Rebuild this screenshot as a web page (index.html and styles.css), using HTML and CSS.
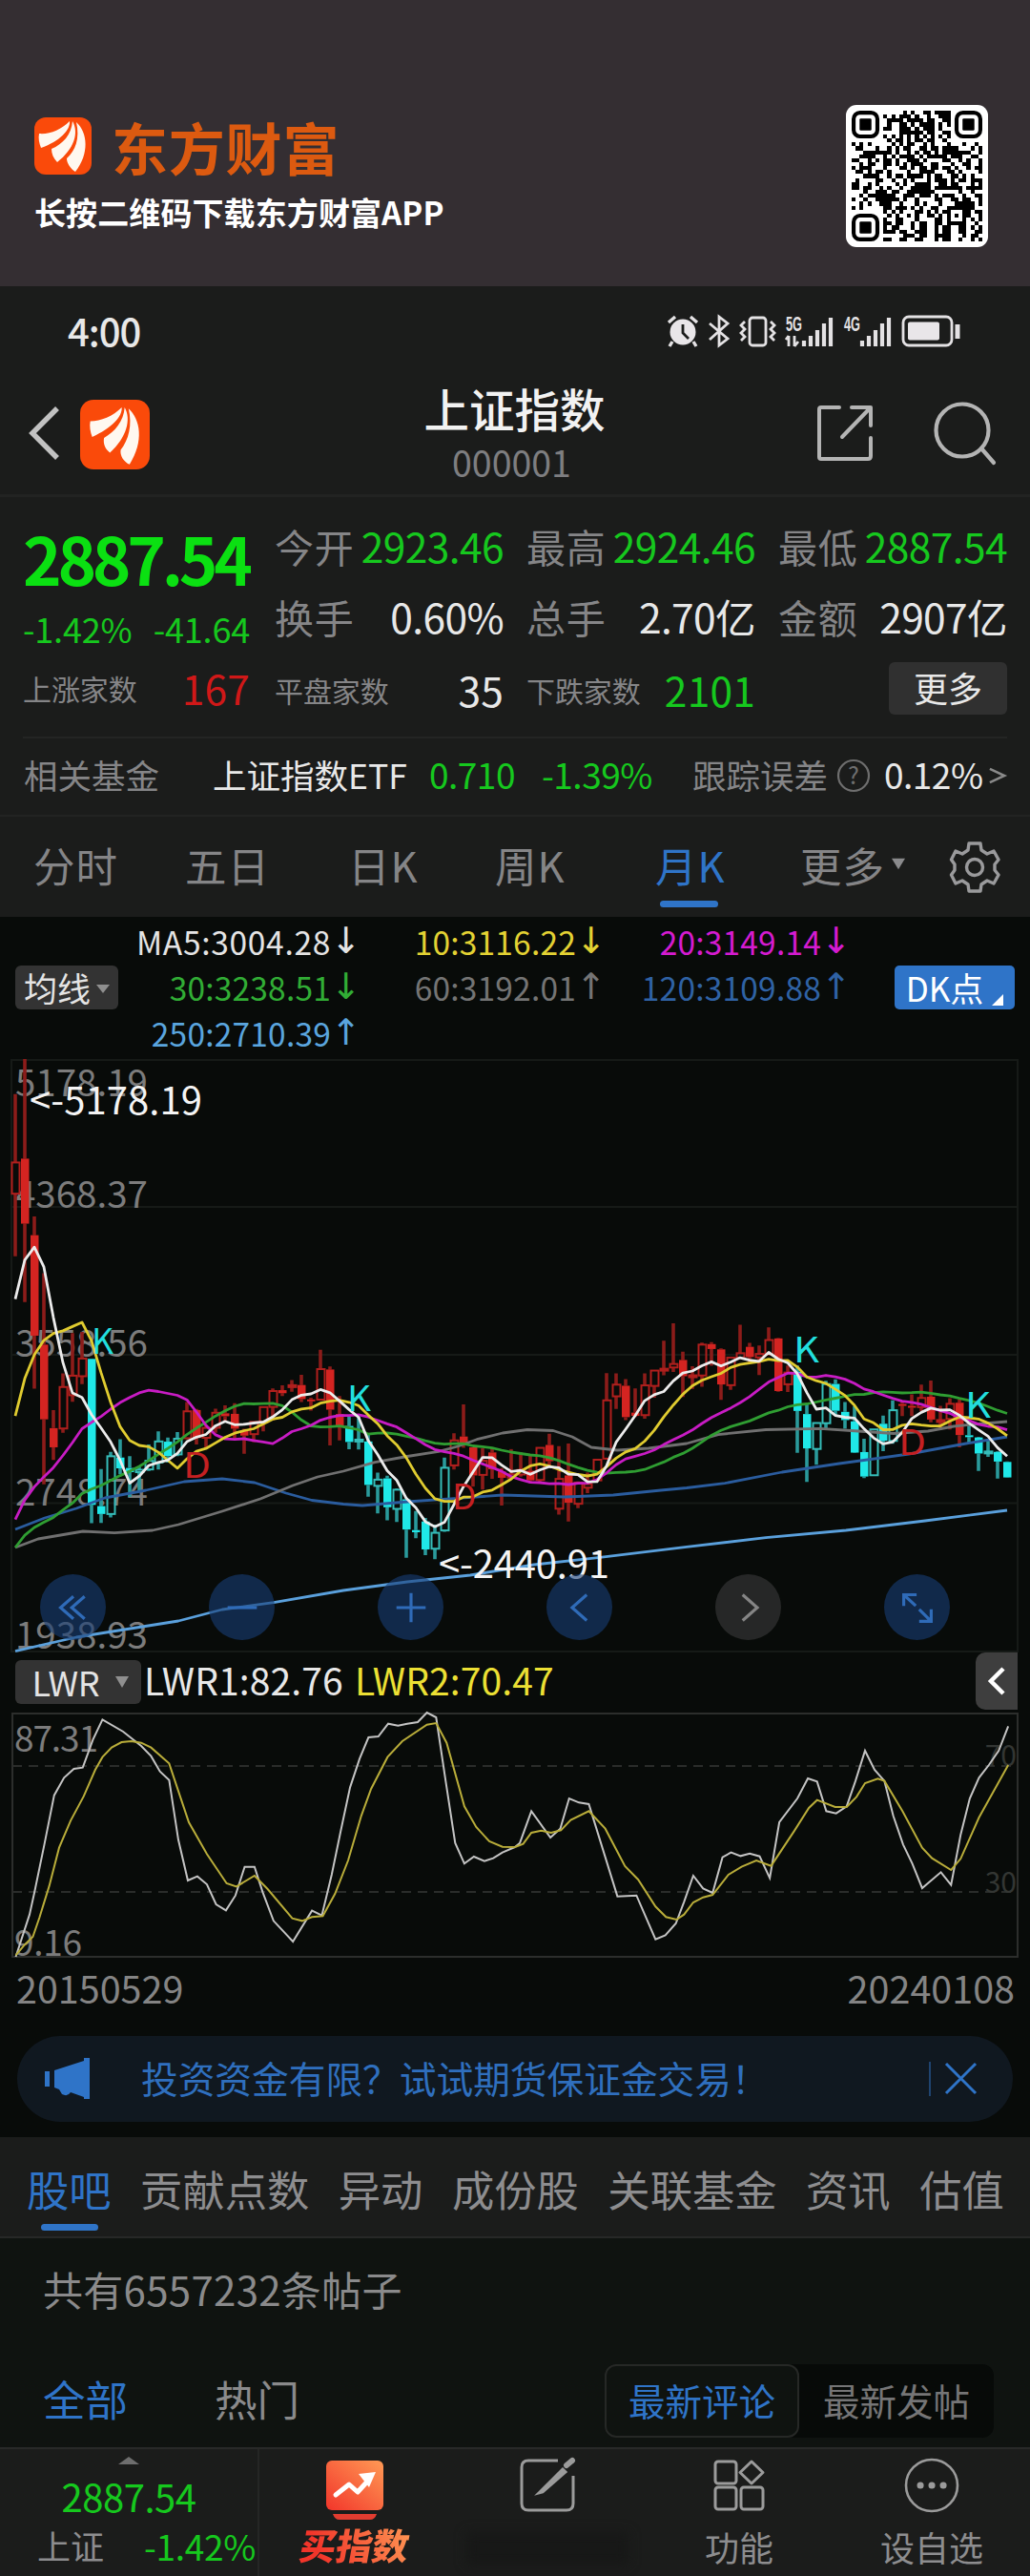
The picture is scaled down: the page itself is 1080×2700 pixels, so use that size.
FILE: index.html
```html
<!DOCTYPE html>
<html lang="zh-CN">
<head>
<meta charset="utf-8">
<title>上证指数 000001</title>
<link rel="stylesheet" href="styles.css">
</head>
<body>
<svg width="0" height="0" class="defs" aria-hidden="true">
  <defs>
    <symbol id="brand" viewBox="0 0 60 60">
      <rect width="60" height="60" rx="12" fill="#fa4a0a"/>
      <path fill="#fff8f0" d="M5 17C16 18 28 13 37 4C38 13 27 25 7 32C5 27 4 22 5 17Z"/>
      <path fill="#fff8f0" d="M18 33C30 28 39 18 40 4C47 16 42 33 24 47C20 43 18 38 18 33Z"/>
      <path fill="#fff8f0" d="M44 5C56 16 58 38 43 57C38 54 34 48 34 43C43 35 48 22 44 5Z"/>
    </symbol>
    <symbol id="brand-small" viewBox="0 0 73 73">
      <rect width="73" height="73" rx="14" fill="#fa4a0a"/>
      <g fill="#fff8f0" transform="translate(5.500 4) scale(1.03)">
        <path d="M5 18C16 18 28 13 37 4C38 13 27 25 7 34C5 29 4 23 5 18Z"/>
        <path d="M19 35C30 29 39 18 40 4C47 16 42 35 25 50C20 46 18 41 19 35Z"/>
        <path d="M44 5C56 16 60 38 45 62C39 59 35 53 36 47C44 37 48 22 44 5Z"/>
      </g>
    </symbol>
    <linearGradient id="hot" x1="0" y1="1" x2="1" y2="0"><stop offset="0" stop-color="#f2352a"/><stop offset="1" stop-color="#ff9a55"/></linearGradient>
  </defs>
</svg>

<header class="promo">
  <div class="promo-text">
    <div class="promo-brand"><svg width="60" height="60"><use href="#brand"/></svg><span>东方财富</span></div>
    <div class="promo-tip">长按二维码下载东方财富APP</div>
  </div>
  <div class="qr"><svg id="qr" width="137" height="137" viewBox="0 0 33 33" shape-rendering="crispEdges"></svg></div>
</header>

<div class="status">
  <span class="clock">4:00</span>
  <svg width="310" height="36" viewBox="0 0 310 36" fill="none" stroke="#e4e2e4" stroke-width="2.800">
    <g><circle cx="17" cy="19" r="13.5" fill="#e9e6e9" stroke="none"/><path d="M2 9L9 3M32 9L25 3M6 29L3 34M28 29L31 34" stroke-width="3.4"/><path d="M17 11V20L23 26" stroke="#1b1c1b"/></g>
    <path d="M45 10L64 26L55 33V3L64 10L45 27"/>
    <rect x="87" y="4" width="17" height="29" rx="3"/><path d="M82 8l-4 4 4 4-4 4 4 4-4 4M109 8l4 4-4 4 4 4-4 4 4 4"/>
    <text class="net" x="125" y="18" textLength="17" lengthAdjust="spacingAndGlyphs">5G</text>
    <path d="M128 23V34M128 23l-3 4M134 23V34M134 34l4-5"/>
    <path d="M144 28V34M151 23V34M158 17V34M165 10V34M172 4V34M205 28V34M212 23V34M219 17V34M226 10V34M233 4V34" stroke-width="4.2"/>
    <text class="net" x="186" y="18" textLength="17" lengthAdjust="spacingAndGlyphs">4G</text>
    <rect x="248" y="3" width="51" height="30" rx="6"/><rect x="253" y="8.500" width="33" height="19" rx="2" fill="#e9e6e9" stroke="none"/><path d="M305 11V26" stroke-width="5"/>
  </svg>
</div>

<nav class="nav">
  <svg class="back" width="34" height="56" viewBox="0 0 34 56" fill="none" stroke="#c2c2c2" stroke-width="5.500"><path d="M31 2L5 28L31 54"/></svg>
  <svg class="nav-logo" width="73" height="73"><use href="#brand-small"/></svg>
  <div class="nav-title"><h1>上证指数</h1><span>000001</span></div>
  <svg width="60" height="60" viewBox="0 0 60 60" fill="none" stroke="#b4b4b4" stroke-width="4" stroke-linecap="round" stroke-linejoin="round"><path d="M24 3H5Q3 3 3 5V55Q3 57 5 57H54Q57 57 57 54V35M37 3H57V22M56 4L27 34"/></svg>
  <svg width="66" height="68" viewBox="0 0 66 68" fill="none" stroke="#b4b4b4" stroke-width="4.200" stroke-linecap="round"><circle cx="30" cy="31" r="27.500"/><path d="M50 50L63 65"/></svg>
</nav>

<section class="quote">
  <div class="qcol first">
    <div class="price">2887.54</div>
    <div class="row chg"><span>-1.42%</span><span>-41.64</span></div>
    <div class="row cnt"><small>上涨家数</small><b class="red">167</b></div>
  </div>
  <div class="qcol">
    <div class="row"><i>今开</i><b class="green">2923.46</b></div>
    <div class="row"><i>换手</i><b>0.60%</b></div>
    <div class="row cnt"><small>平盘家数</small><b>35</b></div>
  </div>
  <div class="qcol">
    <div class="row"><i>最高</i><b class="green">2924.46</b></div>
    <div class="row"><i>总手</i><b>2.70亿</b></div>
    <div class="row cnt"><small>下跌家数</small><b class="green">2101</b></div>
  </div>
  <div class="qcol">
    <div class="row"><i>最低</i><b class="green">2887.54</b></div>
    <div class="row"><i>金额</i><b>2907亿</b></div>
    <div class="row end"><button class="more">更多</button></div>
  </div>
</section>

<section class="fund">
  <span class="muted fund-label">相关基金</span>
  <span class="fund-name">上证指数ETF</span>
  <span class="green num fund-price">0.710</span>
  <span class="green num fund-chg">-1.39%</span>
  <span class="muted">跟踪误差</span>
  <svg class="help" width="36" height="36" viewBox="0 0 36 36"><circle cx="18" cy="18" r="16" fill="none" stroke="#6e6e6e" stroke-width="2.200"/><text x="18" y="27" text-anchor="middle">?</text></svg>
  <span class="num">0.12%</span>
  <svg class="go" width="18" height="18" viewBox="0 0 20 20" fill="none" stroke="#8a8a8a" stroke-width="2.800"><path d="M1 2L18 10L1 18"/></svg>
</section>

<nav class="periods">
  <span>分时</span><span>五日</span><span>日K</span><span>周K</span><span class="on">月K</span>
  <span class="drop">更多<svg width="14" height="13" viewBox="0 0 16 13"><path d="M0 0H16L8 13Z" fill="#8a8a8c"/></svg></span>
  <svg width="52" height="54" viewBox="0 0 52 54" fill="none" stroke="#9a9a9c" stroke-width="3.400" stroke-linejoin="round"><path d="M20 2H32L33 9L39 13L46 10L51 19L47 24V30L51 35L46 44L39 41L33 45L32 52H20L19 45L13 41L6 44L1.500 35L5 30V24L1.500 19L6 10L13 13L19 9Z"/><circle cx="26" cy="27" r="8.500"/></svg>
</nav>

<section class="ma">
  <button class="chip">均线<svg width="14" height="9"><path d="M0 0H14L7 9Z" fill="#8f8f8f"/></svg></button>
  <div class="ma-grid">
    <span class="white wide-name">MA5:3004.28<u>↓</u></span><span class="yellow">10:3116.22<u>↓</u></span><span class="magenta">20:3149.14<u>↓</u></span>
    <span class="lime">30:3238.51<u>↓</u></span><span class="gray">60:3192.01<u>↑</u></span><span class="blue">120:3109.88<u>↑</u></span>
    <span class="sky">250:2710.39<u>↑</u></span>
  </div>
  <button class="dk">DK点<svg width="12" height="12"><path d="M12 0V12H0Z" fill="#fff"/></svg></button>
</section>

<section class="kchart">
  <svg id="kline" width="1080" height="622" viewBox="0 0 1080 622" fill="none">
    <g stroke="#161a17" stroke-width="2"><path d="M12 1H1067V621H12ZM12 155H1067M12 310H1067M12 465.500H1067"/></g>
    <g class="axis"><text x="16" y="39">5178.19</text><text x="16" y="156">4368.37</text><text x="16" y="312">3558.56</text><text x="16" y="468">2748.74</text><text x="16" y="618">1938.93</text></g>
    <g id="candles"></g>
    <g stroke-width="2.800" stroke-linejoin="round">
      <polyline stroke="#5aa0dc" points="16,620.600 80,606 187,589 233,577 287,569.600 360,557 427,548 493,541 560,530 627,522.700 720,511.400 803,501.700 887,494 970,484 1056,473"/>
      <polyline stroke="#2a5c9e" points="16,493 47,481 80,471 110,460 153,452 193,443 233,440 267,444 300,455 327,462.500 360,466.500 380,468 427,464 480,460.400 527,457 593,459 643,457 693,452 720,449.500 760,444.600 820,433 880,424 953,414 1013,403 1056,396"/>
      <polyline stroke="#707070" points="16,512 40,503 87,495 120,496.600 160,494 187,488 233,474 273,461 307,447 333,438 360,432 393,422.600 427,416.500 460,411.400 480,406 500,398.700 527,392 553,388.500 580,389.500 600,396 620,407 647,410 680,408 720,403 753,393.600 803,388.500 860,387.400 900,390 937,392.500 973,390 1000,385 1020,383 1056,380"/>
      <g id="averages"></g>
    </g>
    <g class="marks"><text class="k" x="96" y="309" textLength="23" lengthAdjust="spacingAndGlyphs">K</text><text class="k" x="364" y="369" textLength="25" lengthAdjust="spacingAndGlyphs">K</text><text class="k" x="832" y="318" textLength="27" lengthAdjust="spacingAndGlyphs">K</text><text class="k" x="1012" y="376" textLength="27" lengthAdjust="spacingAndGlyphs">K</text><text class="d" x="192" y="439" textLength="29" lengthAdjust="spacingAndGlyphs">D</text><text class="d" x="474" y="472">D</text><text class="d" x="942" y="415" textLength="29" lengthAdjust="spacingAndGlyphs">D</text></g>
    <g class="peaks"><text x="31" y="58" textLength="181">&lt;-5178.19</text><text x="460" y="544" textLength="179">&lt;-2440.91</text></g>
  </svg>
  <div class="tools">
    <button><svg viewBox="0 0 40 40"><path d="M20 7L5 20L20 33M33 7L18 20L33 33"/></svg></button>
    <button><svg viewBox="0 0 40 40"><path d="M3 20H37"/></svg></button>
    <button><svg viewBox="0 0 40 40"><path d="M3 20H37M20 3V37"/></svg></button>
    <button><svg viewBox="0 0 40 40"><path d="M28 5L11 20L28 35"/></svg></button>
    <button class="off"><svg viewBox="0 0 40 40"><path d="M13 5L30 20L13 35"/></svg></button>
    <button><svg viewBox="0 0 40 40"><path d="M19 5H4V18M4 5L18 18M36 22V36H22M36 36L22 22"/></svg></button>
  </div>
</section>

<section class="lwr-head">
  <button class="chip wide">LWR<svg width="14" height="12"><path d="M0 0H14L7 12Z" fill="#8f8f8f"/></svg></button>
  <span class="l1">LWR1:82.76</span><span class="l2">LWR2:70.47</span>
  <button class="fold"><svg width="18" height="30" viewBox="0 0 18 30" fill="none" stroke="#fff" stroke-width="4.500"><path d="M16 2L3 15L16 28"/></svg></button>
</section>

<section class="lwr">
  <svg width="1080" height="257" viewBox="0 0 1080 257" fill="none">
    <path d="M13 1H1067V256H13Z" stroke="#2c2e2c" stroke-width="2"/>
    <path d="M13 56H1067M13 188H1067" stroke="#2a2c2a" stroke-width="2" stroke-dasharray="10 7"/>
    <g class="axis"><text x="15" y="41" textLength="88">87.31</text><text x="15" y="255" textLength="71">9.16</text><text class="dim" x="1066" y="56">70</text><text class="dim" x="1066" y="189">30</text></g>
    <g transform="scale(.34435 .33333) translate(0 -225)" stroke-width="2" class="lines">
      <polyline stroke="#c4c4c4" points="48,993 90,860 105,790 135,640 165,485 195,430 225,402 252,398 283,310 312,247 375,285 430,330 460,362 487,410 515,437 543,625 572,753 601,740 630,765 658,828 688,847 717,800 745,710 775,710 800,790 833,880 892,945 950,848 980,863 1010,735 1037,600 1066,460 1095,370 1122,303 1152,300 1182,260 1212,266 1240,260 1272,255 1300,225 1328,240 1357,440 1386,635 1414,700 1443,678 1475,692 1502,683 1530,665 1568,648"/>
      <polyline stroke="#b9ad3a" points="48,988 75,955 100,930 120,870 150,770 180,650 215,565 255,488 290,405 312,365 340,335 370,318 400,315 430,320 460,335 515,385 575,570 630,670 690,762 720,772 775,738 815,780 890,872 920,880 950,868 983,865 1020,795 1060,690 1100,550 1130,465 1180,365 1225,315 1300,263 1328,258 1360,320 1414,520 1450,585 1490,630 1530,647 1568,648"/>
      <g transform="translate(1568 0)">
        <polyline stroke="#c4c4c4" points="0,648 15,635 50,535 108,618 138,590 165,495 195,508 225,513 312,803 370,800 428,938 458,925 490,888 515,820 543,738 573,778 602,792 632,680 658,665 687,676 715,668 745,677 776,745 805,570 860,495 892,432 920,442 948,535 978,542 1010,520 1037,440 1066,345 1095,405 1125,440 1152,550 1182,640 1210,700 1240,777 1297,727 1328,767 1357,610 1385,495 1413,430 1443,390 1473,345 1502,268"/>
        <polyline stroke="#b9ad3a" points="0,648 25,638 50,603 80,596 110,603 140,595 170,563 225,535 275,590 335,708 375,750 428,835 460,868 492,876 515,860 543,822 573,806 602,798 650,735 690,710 735,690 780,707 850,598 895,525 920,500 975,522 1010,522 1040,490 1066,447 1105,433 1125,440 1180,535 1240,650 1270,683 1328,720 1357,685 1413,555 1502,390"/>
      </g>
    </g>
  </svg>
</section>
<div class="dates"><span>20150529</span><span>20240108</span></div>

<aside class="notice">
  <svg width="48" height="44" viewBox="0 0 48 44" fill="#2f74c8"><path d="M0 14H5V30H0ZM10 13L41 3V0H47V43H41V41L27 36Q24 41 18 38L15 33L10 31Z"/></svg>
  <span>投资资金有限？试试期货保证金交易！</span>
  <svg class="close" width="50" height="38" viewBox="0 0 50 38" fill="none"><path d="M1 1V37" stroke="#1f4470" stroke-width="2"/><path d="M18 3L49 34M49 3L18 34" stroke="#2f74c8" stroke-width="3"/></svg>
</aside>

<nav class="tabs"><span class="on">股吧</span><span>贡献点数</span><span>异动</span><span>成份股</span><span>关联基金</span><span>资讯</span><span>估值</span></nav>

<section class="posts">
  <p>共有6557232条帖子</p>
  <div class="filter">
    <span class="on">全部</span><span>热门</span>
    <div class="seg"><button class="sel">最新评论</button><button>最新发帖</button></div>
  </div>
</section>

<footer class="bottom">
  <div class="ticker">
    <svg width="22" height="8"><path d="M0 8L11 0L22 8Z" fill="#6e6e6e"/></svg>
    <strong>2887.54</strong>
    <div><span>上证</span><em>-1.42%</em></div>
  </div>
  <div class="item buy">
    <svg width="62" height="64" viewBox="0 0 62 64"><rect x="1" y="1" width="60" height="52" rx="6" fill="url(#hot)"/><path d="M8 57H54Q52 63 47 63H15Q10 63 8 57Z" fill="#e23c30"/><path d="M11 37L25 26L34 34L45 22" fill="none" stroke="#fff" stroke-width="5" stroke-linecap="round" stroke-linejoin="round"/><path d="M35 15L53 13L46 29Z" fill="#fff"/></svg>
    <span>买指数</span>
  </div>
  <div class="item edit">
    <svg width="58" height="58" viewBox="0 0 58 58" fill="none" stroke="#9b9b9b" stroke-width="3"><path d="M40 3H9Q2 3 2 10V48Q2 55 9 55H49Q56 55 56 48V19"/><path d="M20 37L45 12L48 15L24 36Z" fill="#9b9b9b"/><path d="M49 8L55 3" stroke-width="6" stroke-linecap="round"/></svg>
    <div class="smudge"></div>
  </div>
  <div class="item">
    <svg width="56" height="58" viewBox="0 0 56 58" fill="none" stroke="#9b9b9b" stroke-width="3"><rect x="3" y="4" width="22" height="23" rx="3"/><rect x="3" y="31" width="22" height="23" rx="3"/><rect x="30" y="31" width="23" height="23" rx="3"/><path d="M41 4L53 15.500L41 27L29 15.500Z" stroke-linejoin="round"/></svg>
    <span>功能</span>
  </div>
  <div class="item last">
    <svg width="58" height="58" viewBox="0 0 58 58" fill="none" stroke="#9b9b9b" stroke-width="2.600"><circle cx="29" cy="29" r="27"/><path d="M17 29h.1M29 29h.1M41 29h.1" stroke-width="7" stroke-linecap="round"/></svg>
    <span>设自选</span>
  </div>
</footer>
<script src="app.js"></script>
</body>
</html>
```
FILE: styles.css
```css
* { box-sizing: border-box; }
body { margin: 0; width: 1080px; background: #080b09; color: #e8e8e8; font-family: "Noto Sans CJK SC", "Noto Sans", sans-serif; overflow-x: hidden; }
svg { display: block; flex: none; overflow: visible; }
.defs { position: absolute; }
button { border: 0; padding: 0; margin: 0; font: inherit; color: inherit; background: none; }
i, em, u { font-style: normal; text-decoration: none; }
b, h1, strong { font-weight: 400; margin: 0; }
.green { color: #16c81e; }
.red { color: #d01818; }
.muted { color: #858587; }

.promo { height: 300px; background: #342e32; display: flex; justify-content: space-between; align-items: flex-start; padding: 110px 44px 0 36px; }
.promo-brand { display: flex; align-items: center; gap: 21px; height: 60px; margin-top: 13px; }
.promo-brand span { font-size: 59px; font-weight: 700; line-height: 60px; color: #dc5a10; letter-spacing: .8px; padding-top: 2px; }
.promo-tip { font-size: 33px; font-weight: 700; color: #fff; line-height: 40px; margin-top: 19px; letter-spacing: .1px; }
.qr { width: 149px; height: 149px; border-radius: 11px; background: #fff; padding: 6px; }

.status { height: 97px; background: #1b1c1b; display: flex; justify-content: space-between; padding: 29px 71px 0 71px; }
.clock { font-size: 40px; line-height: 40px; font-weight: 500; letter-spacing: -1px; margin-top: -3px; }
.net { font: 700 22px "Liberation Sans", sans-serif; fill: #e4e2e4; stroke: none; }

.nav { height: 124px; background: #1b1c1b; border-bottom: 3px solid #222322; display: flex; align-items: center; padding: 0 35px 8px 29px; }
.nav svg:nth-of-type(3) { margin-right: 63px; }
.nav-logo { margin: 3px 0 0 21px; }
.nav-title { flex: 1; text-align: center; padding: 2px 0 0 66px; }
.nav-title h1 { font-size: 47.500px; line-height: 58px; font-weight: 500; color: #f2f2f2; }
.nav-title span { display: block; font-size: 37.500px; line-height: 54px; color: #7e7e80; margin-right: 6px; }

.quote { height: 251px; background: #1b1c1b; display: grid; grid-template-columns: repeat(4, 240px); gap: 24px; padding: 15px 24px 0; }
.qcol { margin-top: -1px; font-size: 43px; }
.row { display: flex; justify-content: space-between; align-items: center; height: 74px; }
.row i { font-size: 41px; color: #858587; letter-spacing: .8px; line-height: 60px; }
.row b { letter-spacing: -.6px; line-height: 60px; font-size: 42.500px; }
.row small { font-size: 30px; color: #858587; letter-spacing: -.1px; }
.first { margin-top: 0; width: 238px; }
.price { font-size: 69px; font-weight: 700; color: #0be012; line-height: 96px; letter-spacing: -4.3px; white-space: nowrap; }
.row.chg { height: 48px; font-size: 36px; color: #16c81e; letter-spacing: -.2px; padding-top: 4px; }
.row.cnt { height: 78px; padding-top: 1px; }
.first .cnt { height: 80px; }
.row.cnt b { letter-spacing: .2px; }
.more { width: 124px; height: 55px; border-radius: 6px; background: #303030; font-size: 36px; line-height: 50px; padding-bottom: 4px; }
.row.end { justify-content: flex-end; height: 77px; }

.fund { height: 84px; background: #1b1c1b; border-bottom: 2px solid #222322; display: flex; align-items: center; padding: 0 24px 4px 25px; font-size: 35.500px; position: relative; }
.fund::before { content: ""; position: absolute; left: 24px; right: 24px; top: 0; height: 2px; background: #242524; }
.fund-label { width: 198px; }
.fund-name { width: 227px; white-space: nowrap; letter-spacing: 0; }
.fund .num { font-size: 37px; letter-spacing: -.5px; }
.fund-price { width: 118px; }
.fund-chg { width: 158px; }
.help { margin: 4px 14px 0 9px; }
.help text { font-size: 25px; fill: #6e6e6e; }
.go { margin: 3px 1px 0 auto; }

.periods { height: 105px; background: #1b1c1b; display: grid; grid-template-columns: 159px 171px 154px 168px 152px 157px 52px; align-items: start; padding: 18px 0 0 35px; font-size: 43.500px; line-height: 66px; color: #858587; letter-spacing: 1px; }
.periods > svg { margin-top: 8px; }
.periods .on { color: #2f74c8; position: relative; }
.periods .on::after { content: ""; position: absolute; left: 5px; top: 70px; width: 61px; height: 7px; border-radius: 4px; background: #2f74c8; }
.drop { display: flex; align-items: center; gap: 7px; height: 66px; }
.drop svg { margin-top: -4px; }

.ma { height: 149px; position: relative; display: grid; grid-template-columns: 108px 1fr 126px; padding: 0 16px; align-items: center; }
.chip { width: 108px; height: 46px; border-radius: 6px; background: #333; color: #e4e4e4; font-size: 35px; display: flex; align-items: center; justify-content: center; gap: 6px; line-height: 44px; }
.chip svg { margin-top: 3px; }
.ma .chip, .dk { position: relative; top: -1px; }
.ma-grid { display: grid; grid-template-columns: 250px 257px 257px; grid-auto-rows: 48px; line-height: 48px; font-size: 33.500px; text-align: right; align-self: start; padding-top: 2px; letter-spacing: .2px; }
.ma-grid span { white-space: nowrap; }
.ma-grid .wide-name { letter-spacing: .7px; }
.ma-grid u { display: inline-block; width: 27px; height: 48px; vertical-align: top; font: 38px/46px "DejaVu Sans"; text-align: center; letter-spacing: 0; }
.white { color: #e4e4e4; } .yellow { color: #e3d233; } .magenta { color: #d41bd0; } .lime { color: #31ad35; } .gray { color: #747474; } .blue { color: #2f62a4; } .sky { color: #5aa5de; }
.dk { height: 46px; width: 126px; border-radius: 5px; background: #2f74c8; color: #fff; font-size: 35px; display: flex; align-items: center; justify-content: center; gap: 9px; line-height: 44px; }
.dk svg { margin-top: 26px; }

.kchart { height: 622px; position: relative; }
.axis { font-size: 38.500px; fill: #7c7c7c; }
.marks { font-size: 37px; }
.k { fill: #22dede; } .d { fill: #c42022; }
.peaks { font-size: 40px; fill: #f4f4f4; }
.tools { position: absolute; left: 42px; top: 540px; display: flex; gap: 108px; }
.tools button { width: 69px; height: 69px; border-radius: 50%; background: rgba(24, 62, 118, .6); display: flex; align-items: center; justify-content: center; }
.tools svg { width: 36px; height: 36px; fill: none; stroke: #2f6bb8; stroke-width: 3.500; }
.tools .off { background: rgba(64, 64, 64, .55); }
.tools .off svg { stroke: #858585; }

.lwr-head { height: 63px; display: flex; align-items: flex-start; padding: 0 13px 0 16px; font-size: 39px; line-height: 60px; letter-spacing: .1px; }
.chip.wide { width: 132px; margin: 8px 3px 0 0; gap: 17px; padding: 0 0 3px 5px; font-size: 36px; letter-spacing: -.3px; }
.l1, .l2 { margin-top: -2px; }
.l1 { width: 221px; color: #e8e8e8; } .l2 { color: #ece034; }
.fold { margin-left: auto; width: 44px; height: 60px; background: #3e3e3e; border-radius: 10px 0 0 10px; display: flex; align-items: center; justify-content: center; }

.lwr { height: 257px; }
.lwr .axis { font-size: 37px; }
.lwr .dim { font-size: 30px; fill: #333633; text-anchor: end; }
.lines polyline { vector-effect: non-scaling-stroke; }
.dates { height: 82px; display: flex; justify-content: space-between; padding: 1px 16px 0 17px; font-size: 39.500px; line-height: 60px; color: #848484; }

.notice { margin: 0 18px; height: 90px; border-radius: 45px; background: #101820; display: flex; align-items: center; padding: 0 38px 0 29px; color: #2f6fbe; font-size: 38.700px; }
.notice span { margin-left: 53px; padding-bottom: 4px; white-space: nowrap; }
.notice .close { margin-left: auto; }

.tabs { margin-top: 16px; height: 106px; background: #1b1c1b; border-bottom: 2px solid #272827; display: flex; gap: 30.500px; padding: 21px 0 0 28px; font-size: 44.300px; line-height: 66px; color: #8d8d8f; white-space: nowrap; }
.tabs .on, .filter .on { color: #2f74c8; }
.tabs .on { position: relative; }
.tabs .on::after { content: ""; position: absolute; left: 15px; top: 70px; width: 60px; height: 7px; border-radius: 4px; background: #2f74c8; }

.posts { height: 219px; background: #0f1310; padding: 25px 38px 0 45px; color: #8a8a8b; }
.posts p { margin: 0; font-size: 42px; line-height: 56px; letter-spacing: .3px; }
.filter { display: flex; align-items: center; margin-top: 51px; font-size: 44.500px; line-height: 70px; }
.filter > span { width: 180px; padding-bottom: 5px; }
.seg { margin-left: auto; display: flex; background: #070a08; border-radius: 12px; font-size: 38.500px; color: #757576; }
.seg button { width: 204px; height: 77px; line-height: 66px; padding-bottom: 4px; }
.seg .sel { color: #2f74c8; background: #0f1310; border: 2px solid #262826; border-radius: 12px; line-height: 64px; }

.bottom { height: 137px; background: #1b1c1b; border-top: 2px solid #282928; display: flex; color: #8d8d8f; }
.ticker { width: 272px; border-right: 2px solid #252625; display: flex; flex-direction: column; align-items: center; padding-top: 8px; }
.ticker strong { color: #16c81e; font-size: 40px; line-height: 54px; margin-top: 6px; letter-spacing: -.5px; }
.ticker div { display: flex; width: 100%; justify-content: space-between; font-size: 35px; line-height: 44px; padding: 3px 2px 0 39px; }
.ticker em { color: #16c81e; font-size: 37px; letter-spacing: -.3px; }
.item { width: 202px; display: flex; flex-direction: column; align-items: center; font-size: 36px; line-height: 46px; padding-top: 9px; }
.item span { margin-top: 12px; white-space: nowrap; }
.buy { padding-top: 11px; width: 200px; }
.item.buy span { margin-top: 2px; font-weight: 900; font-size: 38px; transform: skewX(-10deg); background: linear-gradient(60deg, #f2352a 20%, #ff9a55); -webkit-background-clip: text; background-clip: text; color: transparent; }
.edit { padding-left: 2px; }
.smudge { width: 170px; height: 34px; margin-top: 20px; background: #171817; filter: blur(6px); }
```
FILE: app.js
```javascript
const NS = 'http://www.w3.org/2000/svg';
const add = (parent, tag, attrs) => {
  const el = document.createElementNS(NS, tag);
  for (const k in attrs) el.setAttribute(k, attrs[k]);
  parent.appendChild(el);
};

// Monthly open, high, low, close from 2015-05 to 2024-01
const months = [
  [4441,4986,4099,4612],[4633,5178,3848,4277],[4214,4317,3374,3664],[3615,4006,2851,3206],[3158,3257,2984,3053],[3156,3458,3133,3383],[3338,3678,3302,3445],[3442,3685,3399,3539],
  [3537,3539,2638,2738],[2731,2934,2639,2688],[2688,3028,2669,3004],[2997,3097,2905,2938],[2940,3004,2781,2917],[2917,2946,2808,2930],[2932,3069,2923,2979],[2970,3140,2932,3085],[3084,3106,2969,3005],[3014,3137,3004,3100],[3103,3301,3097,3250],[3257,3263,3068,3104],
  [3105,3175,3044,3159],[3160,3264,3132,3242],[3239,3283,3193,3223],[3236,3295,3097,3155],[3144,3155,3017,3117],[3125,3193,3082,3192],[3192,3277,3140,3273],[3274,3375,3201,3361],[3366,3392,3333,3349],[3393,3421,3357,3393],[3394,3450,3301,3317],[3315,3324,3254,3307],
  [3314,3587,3314,3481],[3479,3495,3063,3259],[3235,3334,3091,3169],[3170,3221,3042,3082],[3087,3220,3041,3095],[3085,3129,2782,2847],[2842,2915,2691,2876],[2883,2897,2653,2725],[2716,2827,2644,2821],[2768,2772,2449,2603],[2600,2704,2555,2588],[2647,2666,2463,2494],
  [2498,2630,2441,2585],[2598,2997,2591,2941],[2954,3130,2931,3091],[3112,3288,3050,3078],[3053,3053,2838,2899],[2902,3048,2822,2979],[3025,3048,2880,2933],[2921,2939,2734,2886],[2887,3043,2887,2905],[2904,3026,2892,2929],[2925,3008,2857,2872],[2874,3052,2857,3050],
  [3066,3127,2955,2977],[2717,3059,2685,2880],[2899,3074,2647,2750],[2744,2866,2720,2860],[2832,2914,2802,2852],[2872,2985,2872,2985],[2991,3459,2985,3310],[3332,3457,3263,3396],[3390,3426,3202,3218],[3243,3375,3219,3225],[3229,3457,3210,3392],[3389,3475,3325,3473],
  [3475,3637,3447,3483],[3490,3732,3466,3509],[3531,3577,3328,3442],[3445,3497,3373,3447],[3446,3626,3385,3615],[3618,3629,3499,3591],[3589,3594,3313,3397],[3393,3547,3367,3544],[3543,3724,3541,3568],[3603,3625,3515,3547],[3545,3610,3448,3564],[3562,3709,3560,3640],
  [3649,3652,3357,3361],[3398,3500,3356,3462],[3466,3500,3023,3252],[3235,3290,2864,3047],[3044,3187,2958,3186],[3185,3417,3155,3399],[3400,3425,3226,3253],[3247,3301,3155,3202],[3195,3278,3022,3024],[3027,3100,2885,2893],[2900,3150,2897,3151],[3182,3226,3032,3089],
  [3088,3310,3073,3256],[3290,3308,3224,3280],[3280,3343,3224,3273],[3273,3396,3250,3323],[3330,3419,3190,3205],[3200,3280,3150,3202],[3208,3322,3151,3291],[3297,3315,3053,3120],[3119,3177,3078,3110],[3107,3110,2924,3019],[3025,3090,3000,3030],[3028,3032,2882,2975],[2973,2976,2887,2888]
];
// Closes of the months before the visible range, oldest first
const earlier = [2269,2385,2366,2237,2178,2301,1979,1994,2098,2175,2142,2221,2116,2033,2056,2033,2026,2039,2048,2202,2217,2364,2420,2683,3235,3210,3310,3748,4442];

const xAt = i => 16 + i * 10;
const yAt = p => (5178.19 - p) * 0.1915;
const falling = i => (i >= 8 && i < 18) || (i >= 35 && i < 46) || (i >= 82 && i < 93) || i >= 100;

const candles = document.getElementById('candles');
months.forEach(([o, h, l, c], i) => {
  const x = xAt(i), cyan = falling(i);
  const top = yAt(Math.max(o, c)), bottom = Math.max(yAt(Math.min(o, c)), top + 2);
  const wick = cyan ? '#2a9a9b' : '#8c1c1a';
  add(candles, 'path', { d: `M${x} ${yAt(h)}V${top}M${x} ${bottom}V${yAt(l)}`, stroke: wick, 'stroke-width': 3.6 });
  if (c >= o) add(candles, 'rect', { x: x - 3.5, y: top, width: 8, height: bottom - top, stroke: cyan ? '#35bdb9' : '#b01f1d', 'stroke-width': 2 });
  else add(candles, 'rect', { x: x - 4, y: top, width: 8.5, height: bottom - top, fill: cyan ? '#1fe8e8' : '#d42421' });
});

const closes = earlier.concat(months.map(m => m[3]));
const averages = document.getElementById('averages');
[[30, '#2f9e32'], [20, '#c81cc4'], [10, '#e0cc30'], [5, '#ececec']].forEach(([n, color]) => {
  const pts = months.map((_, i) => {
    const end = i + earlier.length + 1;
    const sum = closes.slice(end - n, end).reduce((a, b) => a + b, 0);
    return `${xAt(i)},${yAt(sum / n).toFixed(1)}`;
  });
  add(averages, 'polyline', { points: pts.join(' '), stroke: color });
});

const code = [
  '.............#.#..##.####........',
  '........#.#.###.#..#..###........',
  '.........####.####.##..##........',
  '.........#..##.#.####.#.#........',
  '........##..###.#.###.#..........',
  '............######.##..##........',
  '........#.#.#.#.#.#.#.#.#........',
  '.........#.##.#.##.##..#.........',
  '#.#.#.....#.#.##..#.#...#...#..#.',
  '.##...#..#.#.##..##.##.####...#.#',
  '...#######.#..#.#.##.#.#######..#',
  '..####..#.#.####.#.#####.###..##.',
  '##..#.#.##.#..###.#....##..#.#..#',
  '..#.##..##.#.#.###..##...#..##..#',
  '#.###...#...##.#.##.##.##.#..#.##',
  '.##.#.##.#....#..####...##.#....#',
  '...####..#.##.####.#.##..##.#.#..',
  '.#....##..#..#.#...#.###.#.##.###',
  '##..#.#....#.#..####..##.##...#.#',
  '##.##..#.#..#..#####.#######.####',
  '...#..###.##..#######......#..#..',
  '..#.#######..###.###.#.###..#..##',
  '#..#..######.#..#....##..##.##..#',
  '..#.#..###..#...#.#...#...#####.#',
  '#.#.....##.###.#.#..##..#######..',
  '........#.#.#...##.#.#.##...##.##',
  '.........#.#..#.#..##.#.#.#.##..#',
  '........#..##...#....##.#...#.#.#',
  '........##.##..#.##..##.#####..#.',
  '........#.##...#.##..#.##..##.#.#',
  '........###.##..###..#.##..##..##',
  '.............###.##..####...#.##.',
  '........##..##..##...#.##..#..#.#'
];
const qr = document.getElementById('qr');
let d = '';
code.forEach((row, y) => [...row].forEach((m, x) => { if (m === '#') d += `M${x} ${y}h1v1h-1z`; }));
add(qr, 'path', { d, fill: '#000' });
[[0, 0], [26, 0], [0, 26]].forEach(([x, y]) => {
  add(qr, 'rect', { x: x + .5, y: y + .5, width: 6, height: 6, rx: 1.6, fill: 'none', stroke: '#000', 'shape-rendering': 'auto' });
  add(qr, 'rect', { x: x + 2, y: y + 2, width: 3, height: 3, rx: .3, fill: '#000', 'shape-rendering': 'auto' });
});
```
